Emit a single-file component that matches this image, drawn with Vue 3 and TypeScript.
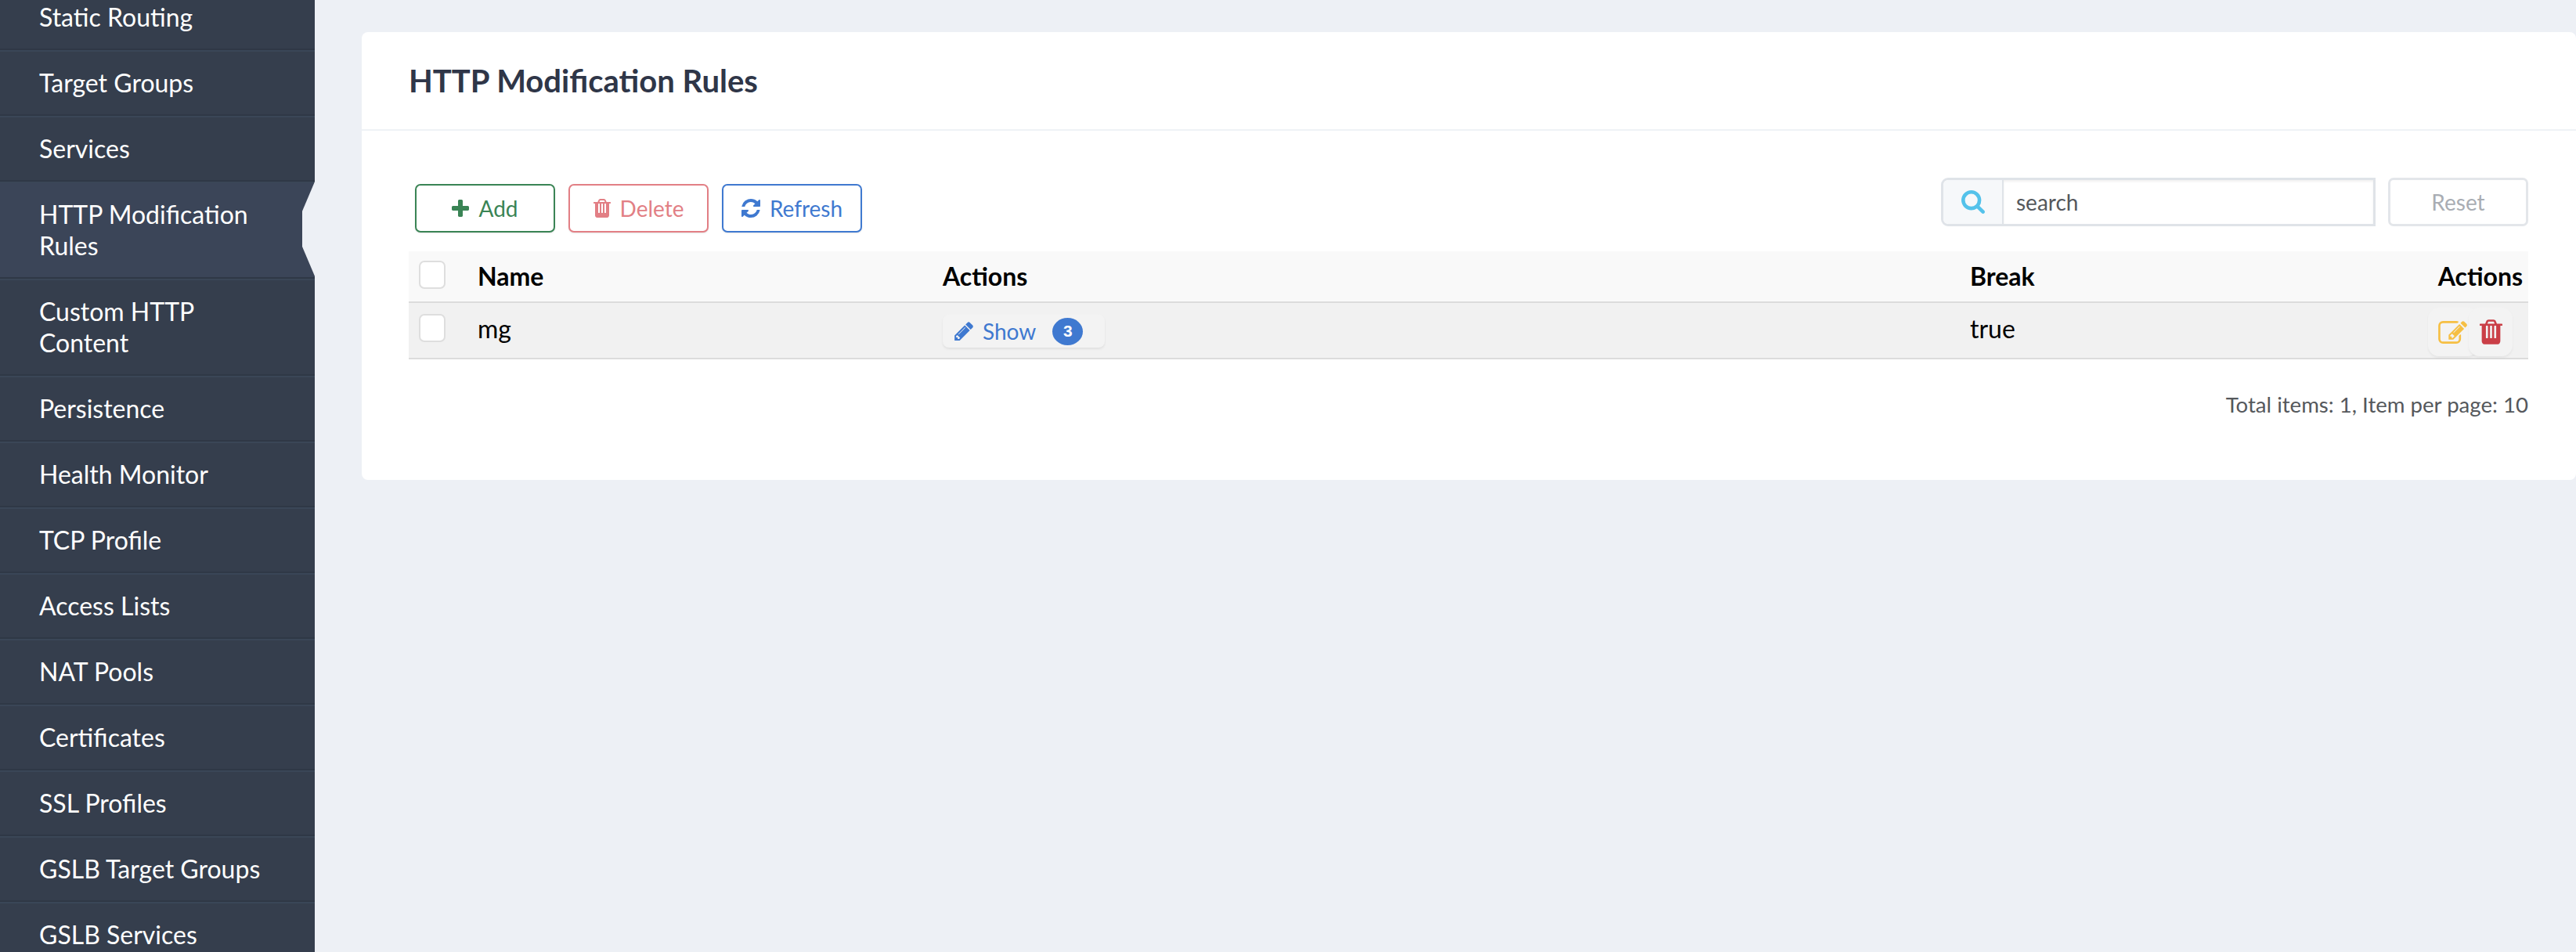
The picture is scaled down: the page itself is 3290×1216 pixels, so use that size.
<script setup lang="ts">
interface NavItem { label: string; active?: boolean }
const nav: NavItem[] = [
  { label: 'Static Routing' },
  { label: 'Target Groups' },
  { label: 'Services' },
  { label: 'HTTP Modification Rules', active: true },
  { label: 'Custom HTTP Content' },
  { label: 'Persistence' },
  { label: 'Health Monitor' },
  { label: 'TCP Profile' },
  { label: 'Access Lists' },
  { label: 'NAT Pools' },
  { label: 'Certificates' },
  { label: 'SSL Profiles' },
  { label: 'GSLB Target Groups' },
  { label: 'GSLB Services' },
]
const trash = 'M512 1248V544q0-14-9-23t-23-9h-64q-14 0-23 9t-9 23v704q0 14 9 23t23 9h64q14 0 23-9t9-23zm256 0V544q0-14-9-23t-23-9h-64q-14 0-23 9t-9 23v704q0 14 9 23t23 9h64q14 0 23-9t9-23zm256 0V544q0-14-9-23t-23-9h-64q-14 0-23 9t-9 23v704q0 14 9 23t23 9h64q14 0 23-9t9-23zM480 384h448l-48-117q-7-9-17-11H546q-10 2-17 11zm928 32v64q0 14-9 23t-23 9h-96v948q0 83-47 143.500t-113 60.500H288q-66 0-113-58.500T128 1464V512H32q-14 0-23-9t-9-23v-64q0-14 9-23t23-9h309l70-167q15-37 54-63t79-26h320q40 0 79 26t54 63l70 167h309q14 0 23 9t9 23z'
</script>

<template>
  <div class="page">
    <aside class="sidebar">
      <ul class="nav">
        <li v-for="item in nav" :key="item.label" class="nav-item" :class="{ active: item.active }">
          <span>{{ item.label }}</span>
        </li>
      </ul>
    </aside>
    <main class="main">
      <section class="card">
        <header class="card-head"><h1>HTTP Modification Rules</h1></header>
        <div class="card-body">
          <div class="toolbar">
            <div class="actions">
              <button class="btn add" type="button">
                <svg class="ic-plus" viewBox="0 128 1408 1408"><path fill="currentColor" d="M1408 736v192q0 40-28 68t-68 28H896v416q0 40-28 68t-68 28H608q-40 0-68-28t-28-68v-416H96q-40 0-68-28T0 928V736q0-40 28-68t68-28h416V224q0-40 28-68t68-28h192q40 0 68 28t28 68v416h416q40 0 68 28t28 68z"/></svg>
                Add
              </button>
              <button class="btn del" type="button">
                <svg class="ic-trash" viewBox="0 128 1408 1536"><path fill="currentColor" :d="trash"/></svg>
                Delete
              </button>
              <button class="btn refresh" type="button">
                <svg class="ic-refresh" viewBox="0 128 1536 1536"><path fill="currentColor" d="M1511 1056q0 5-1 7-64 268-268 434.500T764 1664q-146 0-282.500-55T238 1452l-129 129q-19 19-45 19t-45-19-19-45v-448q0-26 19-45t45-19h448q26 0 45 19t19 45-19 45l-137 137q71 66 161 102t187 36q134 0 250-65t186-179q11-17 53-117 8-23 30-23h192q13 0 22.500 9.500t9.500 22.500zm25-800v448q0 26-19 45t-45 19h-448q-26 0-45-19t-19-45 19-45l138-138Q969 384 768 384q-134 0-250 65T332 628q-11 17-53 117-8 23-30 23H50q-13 0-22.500-9.500T18 736v-7q65-268 270-434.500T768 128q146 0 284 55.500T1297 340l130-129q19-19 45-19t45 19 19 45z"/></svg>
                Refresh
              </button>
            </div>
            <div class="search">
              <div class="input-group">
                <span class="addon">
                  <svg class="search-ic" viewBox="0 0 1664 1664"><path fill="currentColor" d="M1152 704q0-185-131.500-316.500T704 256 387.500 387.500 256 704t131.500 316.500T704 1152t316.500-131.500T1152 704zm512 832q0 52-38 90t-90 38q-54 0-90-38l-343-342q-179 124-399 124-143 0-273.500-55.500t-225-150-150-225T0 704t55.500-273.500 150-225 225-150T704 0t273.500 55.500 225 150 150 225T1408 704q0 220-124 399l343 343q37 37 37 90z"/></svg>
                </span>
                <input class="search-input" type="text" placeholder="search" />
              </div>
              <button class="reset" type="button">Reset</button>
            </div>
          </div>
          <div class="table">
            <div class="tr thead">
              <div class="cell c-check"><span class="check"></span></div>
              <div class="cell c-name">Name</div>
              <div class="cell c-actions">Actions</div>
              <div class="cell c-break">Break</div>
              <div class="cell c-end">Actions</div>
            </div>
            <div class="tr tbody">
              <div class="cell c-check"><span class="check"></span></div>
              <div class="cell c-name">mg</div>
              <div class="cell c-actions">
                <button class="show" type="button">
                  <svg class="pencil" viewBox="128 128 1515 1536"><path fill="currentColor" d="M491 1536l91-91-235-235-91 91v107h128v128h107zm523-928q0-22-22-22-10 0-17 7l-542 542q-7 7-7 17 0 22 22 22 10 0 17-7l542-542q7-7 7-17zm-54-192l416 416-832 832h-416v-416zm683 96q0 53-37 90l-166 166-416-416 166-165q36-38 90-38 53 0 91 38l235 234q37 39 37 91z"/></svg>
                  <span>Show</span>
                  <span class="badge">3</span>
                </button>
              </div>
              <div class="cell c-break">true</div>
              <div class="cell c-end">
                <div class="row-actions">
                  <button class="ra edit" type="button">
                    <svg viewBox="0 128 1784 1408"><path fill="currentColor" d="M888 1184l116-116-152-152-116 116v56h96v96h56zm440-720q-16-16-33 1L945 815q-17 17-1 33t33-1l350-350q17-17 1-33zm80 594v190q0 119-84.500 203.500T1120 1536H288q-119 0-203.500-84.500T0 1248V416q0-119 84.500-203.500T288 128h832q63 0 117 25 15 7 18 23 3 17-9 29l-49 49q-14 14-32 8-23-6-45-6H288q-66 0-113 47t-47 113v832q0 66 47 113t113 47h832q66 0 113-47t47-113V1058q0-13 9-22l64-64q15-15 35-7t20 29zm-96-738l288 288-672 672H640V992zm444 132l-92 92-288-288 92-92q28-28 68-28t68 28l152 152q28 28 28 68t-28 68z"/></svg>
                  </button>
                  <button class="ra remove" type="button">
                    <svg viewBox="0 128 1408 1536"><path fill="currentColor" :d="trash"/></svg>
                  </button>
                </div>
              </div>
            </div>
          </div>
          <p class="footer">Total items: 1, Item per page: 10</p>
        </div>
      </section>
    </main>
  </div>
</template>

<style>
html, body { margin: 0; background: #edf0f5; }
</style>

<style scoped>
* { box-sizing: border-box; }
.page {
  display: flex;
  width: 3290px;
  height: 1216px;
  overflow: hidden;
  font-family: Lato, "Open Sans", sans-serif;
  background: #edf0f5;
}
.sidebar {
  flex: 0 0 402px;
  height: 1216px;
  overflow: hidden;
  background: #353e4d;
}
.nav {
  list-style: none;
  margin: -20px 0 0;
  padding: 0;
}
.nav-item {
  position: relative;
  padding: 20px 50px 20px 50px;
  font-size: 32px;
  line-height: 40px;
  color: #fff;
  background: #353e4d;
  border-top: 2px solid #3a4657;
  border-bottom: 2px solid #2f3846;
}
.nav-item.active {
  background: #3b4558;
}
.nav-item.active::after {
  content: '';
  position: absolute;
  top: -2px;
  right: 0;
  bottom: 0;
  width: 16px;
  background: #edf0f5;
  clip-path: polygon(100% 0, 0 31%, 0 68%, 100% 99%);
}
.main {
  flex: 1;
  min-width: 0;
  padding: 41px 0 0 60px;
}
.card {
  background: #fff;
  border-radius: 8px;
  height: 572px;
}
.card-head {
  height: 126px;
  padding: 0 60px;
  display: flex;
  align-items: center;
  border-bottom: 2px solid #eff2f6;
}
.card-head h1 {
  margin: 0;
  font-size: 40px;
  line-height: 48px;
  font-weight: 700;
  color: #2f3648;
}
.card-body {
  padding: 60px 61px 0 60px;
}
.toolbar {
  display: flex;
  justify-content: space-between;
  align-items: flex-start;
  height: 94px;
}
.actions {
  display: flex;
  gap: 17px;
  padding: 8px 0 0 8px;
}
.btn {
  width: 179px;
  height: 62px;
  display: flex;
  align-items: center;
  justify-content: center;
  gap: 12px;
  background: #fff;
  border: 2px solid;
  border-radius: 7px;
  font: 400 28px Lato, sans-serif;
  box-shadow: 0 1px 2px rgba(0, 0, 0, .1);
  padding: 0;
}
.ic-plus { width: 22px; height: 22px; }
.ic-trash { width: 22px; height: 24px; }
.ic-refresh { width: 24px; height: 24px; }
.add { color: #3a8455; border-color: #3a8455; }
.del { color: #e27f85; border-color: #e27f85; }
.refresh { color: #3f79d0; border-color: #3f79d0; }
.search {
  display: flex;
  gap: 16px;
}
.input-group {
  display: flex;
  width: 555px;
  height: 62px;
  border: 3px solid #dfe3e8;
  border-radius: 9px 0 0 9px;
}
.addon {
  flex: 0 0 77px;
  display: flex;
  align-items: center;
  justify-content: center;
  background: #f6f8fa;
  border-right: 2px solid #dfe3e8;
  border-radius: 7px 0 0 7px;
  color: #54c2ea;
}
.search-ic { width: 30px; height: 30px; }
.search-input {
  flex: 1;
  min-width: 0;
  border: 0;
  outline: 0;
  padding: 0 16px;
  font: 400 28px Lato, sans-serif;
  color: #55585c;
  box-shadow: inset 0 2px 3px rgba(0, 0, 0, .06);
}
.search-input::placeholder { color: #55585c; opacity: 1; }
.reset {
  width: 179px;
  height: 62px;
  background: #fff;
  border: 3px solid #e3e6ea;
  border-radius: 7px;
  color: #a9adb3;
  font: 400 28px Lato, sans-serif;
}
.table { color: #000; font-size: 32px; }
.tr {
  display: grid;
  grid-template-columns: 88px 594px 1312px 1fr auto;
  align-items: start;
}
.thead {
  height: 66px;
  background: #f9f9f9;
  border-bottom: 2px solid #dcdcdc;
  font-weight: 700;
  line-height: 40px;
  padding-top: 12px;
}
.tbody {
  height: 72px;
  background: #f1f1f1;
  border-bottom: 2px solid #dcdcdc;
  line-height: 40px;
  padding-top: 13px;
}
.c-check { padding-left: 13px; }
.tbody .c-check { padding-top: 1px; }
.check {
  display: block;
  width: 34px;
  height: 36px;
  background: #fff;
  border: 2px solid #dedede;
  border-radius: 7px;
}
.c-end { justify-self: end; padding-right: 7px; }
.show {
  display: inline-flex;
  align-items: center;
  width: 207px;
  height: 42px;
  padding: 0 0 0 15px;
  margin-top: 2px;
  background: #f3f3f3;
  border: 0;
  border-radius: 8px;
  box-shadow: 0 2px 3px rgba(0, 0, 0, .07);
  color: #3f79d0;
  font: 400 28px Lato, sans-serif;
}
.pencil { width: 24px; height: 24px; margin-right: 12px; }
.badge {
  display: inline-flex;
  align-items: center;
  justify-content: center;
  width: 39px;
  height: 35px;
  margin-left: 21px;
  border-radius: 50%;
  background: #3f79d0;
  color: #fff;
  font: 700 21px "Liberation Sans", Arial, sans-serif;
}
.row-actions {
  display: flex;
  margin-top: -7px;
  padding-right: 13px;
}
.ra {
  height: 62px;
  display: flex;
  align-items: center;
  justify-content: center;
  background: #f3f3f3;
  border: 0;
  border-radius: 14px;
  box-shadow: 0 2px 3px rgba(0, 0, 0, .05);
  padding: 0;
}
.edit { width: 64px; color: #f6bf43; justify-content: flex-start; padding-left: 13px; }
.edit svg { width: 37px; height: 29px; flex: none; }
.remove { width: 56px; margin-left: -12px; color: #ca3f47; position: relative; }
.remove svg { width: 29px; height: 32px; }
.footer {
  margin: 41px 0 0;
  text-align: right;
  font-size: 27.6px;
  line-height: 34px;
  color: #55585c;
}
</style>
